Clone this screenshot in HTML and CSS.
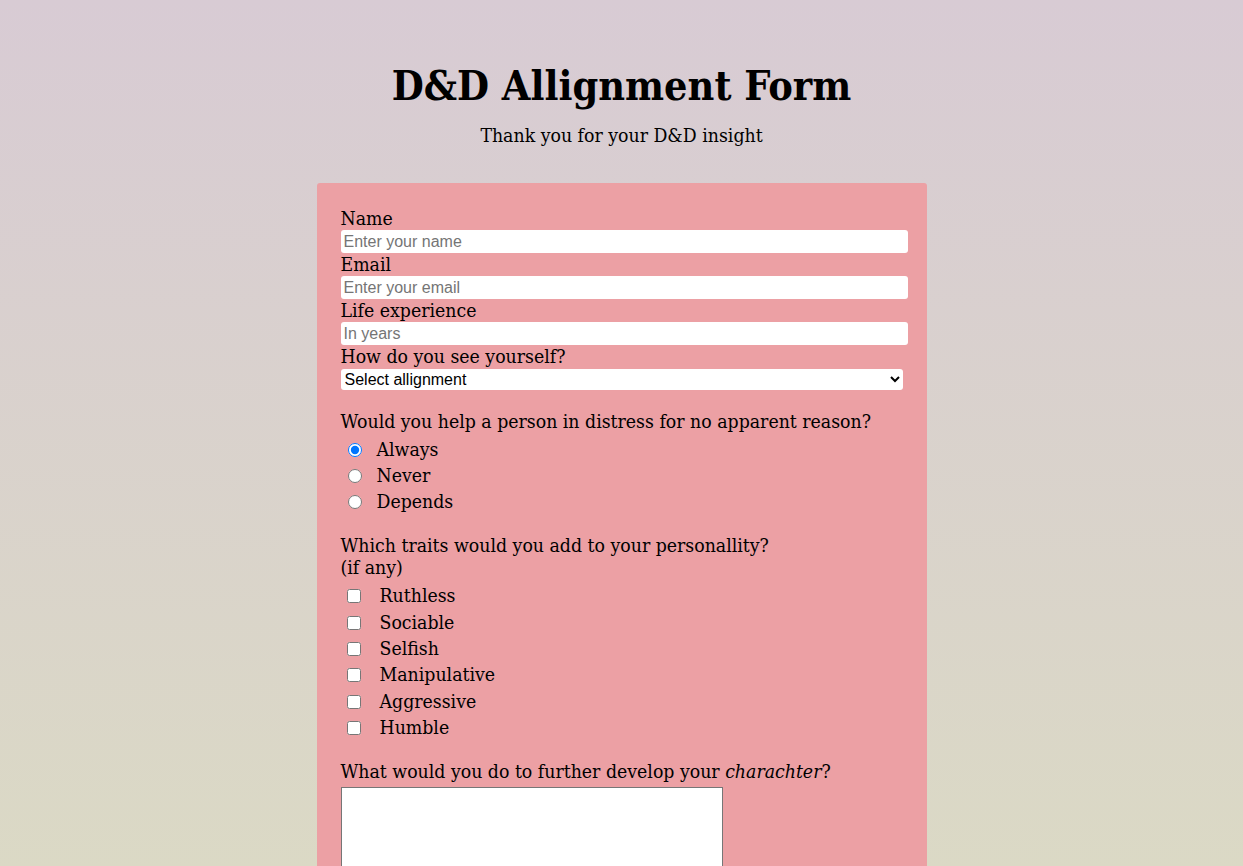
FILE: index.html
```html
<!DOCTYPE html>
<html lang="en">
<head>
<meta charset="utf-8">
<title>D&amp;D Allignment Form</title>
<link rel="stylesheet" href="styles.css">
</head>
<body>
<header class="header">
  <h1 class="title">D&amp;D Allignment Form</h1>
  <p class="subtitle">Thank you for your D&amp;D insight</p>
</header>
<form class="form">
  <label class="field-label" for="name">Name</label>
  <input class="text-input" id="name" type="text" placeholder="Enter your name">
  <label class="field-label" for="email">Email</label>
  <input class="text-input" id="email" type="email" placeholder="Enter your email">
  <label class="field-label" for="years">Life experience</label>
  <input class="text-input" id="years" type="number" placeholder="In years">
  <label class="field-label" for="align">How do you see yourself?</label>
  <select class="select" id="align">
    <option>Select allignment</option>
  </select>

  <p class="question first-question">Would you help a person in distress for no apparent reason?</p>
  <div class="choices">
    <label class="choice radio-choice"><input type="radio" name="help" checked><span>Always</span></label>
    <label class="choice radio-choice"><input type="radio" name="help"><span>Never</span></label>
    <label class="choice radio-choice"><input type="radio" name="help"><span>Depends</span></label>
  </div>

  <p class="question">Which traits would you add to your personallity?<br>(if any)</p>
  <div class="choices">
    <label class="choice check-choice"><input type="checkbox"><span>Ruthless</span></label>
    <label class="choice check-choice"><input type="checkbox"><span>Sociable</span></label>
    <label class="choice check-choice"><input type="checkbox"><span>Selfish</span></label>
    <label class="choice check-choice"><input type="checkbox"><span>Manipulative</span></label>
    <label class="choice check-choice"><input type="checkbox"><span>Aggressive</span></label>
    <label class="choice check-choice"><input type="checkbox"><span>Humble</span></label>
  </div>

  <p class="question last-question">What would you do to further develop your <em>charachter</em>?</p>
  <textarea class="textarea"></textarea>
</form>
</body>
</html>
```

FILE: styles.css
```css
html {
  min-height: 100%;
  background: linear-gradient(180deg, #d8cbd4 0%, #dbdac4 100%);
}
body {
  margin: 0;
  font-family: "DejaVu Serif Condensed", "Liberation Serif", serif;
  font-stretch: condensed;
  color: #000;
  min-height: 866px;
}
.header {
  text-align: center;
  padding-top: 62px;
}
.title {
  margin: 0;
  font-size: 41px;
  line-height: 48px;
  font-weight: bold;
}
.subtitle {
  margin: 14px 0 0;
  font-size: 19.3px;
  line-height: 23px;
}
.form {
  width: 562px;
  margin: 36px auto 0;
  padding: 24px 24px 40px;
  background: #eca0a4;
  border-radius: 3px;
  display: flex;
  flex-direction: column;
  align-items: flex-start;
  box-sizing: content-box;
}
.field-label {
  font-size: 19.3px;
  line-height: 23px;
}
.text-input {
  width: 567px;
  height: 23px;
  box-sizing: border-box;
  border: none;
  border-radius: 3px;
  padding: 0 3px;
  font-family: "Liberation Sans", Arial, sans-serif;
  font-stretch: normal;
  font-size: 16px;
  background: #fff;
  margin: 0;
}
.text-input::placeholder { color: #757575; }
.select {
  width: 562px;
  height: 21px;
  margin: 1px 0 0;
  border: none;
  border-radius: 3px;
  font-family: "Liberation Sans", Arial, sans-serif;
  font-stretch: normal;
  font-size: 16px;
  background: #fff;
}
.question {
  margin: 20px 0 4px;
  font-size: 19.3px;
  line-height: 22px;
}
.first-question { margin-top: 21px; }
.last-question { margin-top: 20px; }
.choices {
  display: flex;
  flex-direction: column;
}
.choice {
  display: flex;
  align-items: center;
  font-size: 19.3px;
  line-height: 26px;
  height: 26px;
}
.check-choice { height: 26.4px; }
.radio-choice input { margin: 0 15px 0 7px; width: 14px; height: 14px; }
.check-choice input { margin: 0 19px 0 6px; width: 14px; height: 14px; }
.textarea {
  width: 382px;
  height: 100px;
  box-sizing: border-box;
  border: 1px solid #767676;
  margin: 0;
  background: #fff;
}
```
